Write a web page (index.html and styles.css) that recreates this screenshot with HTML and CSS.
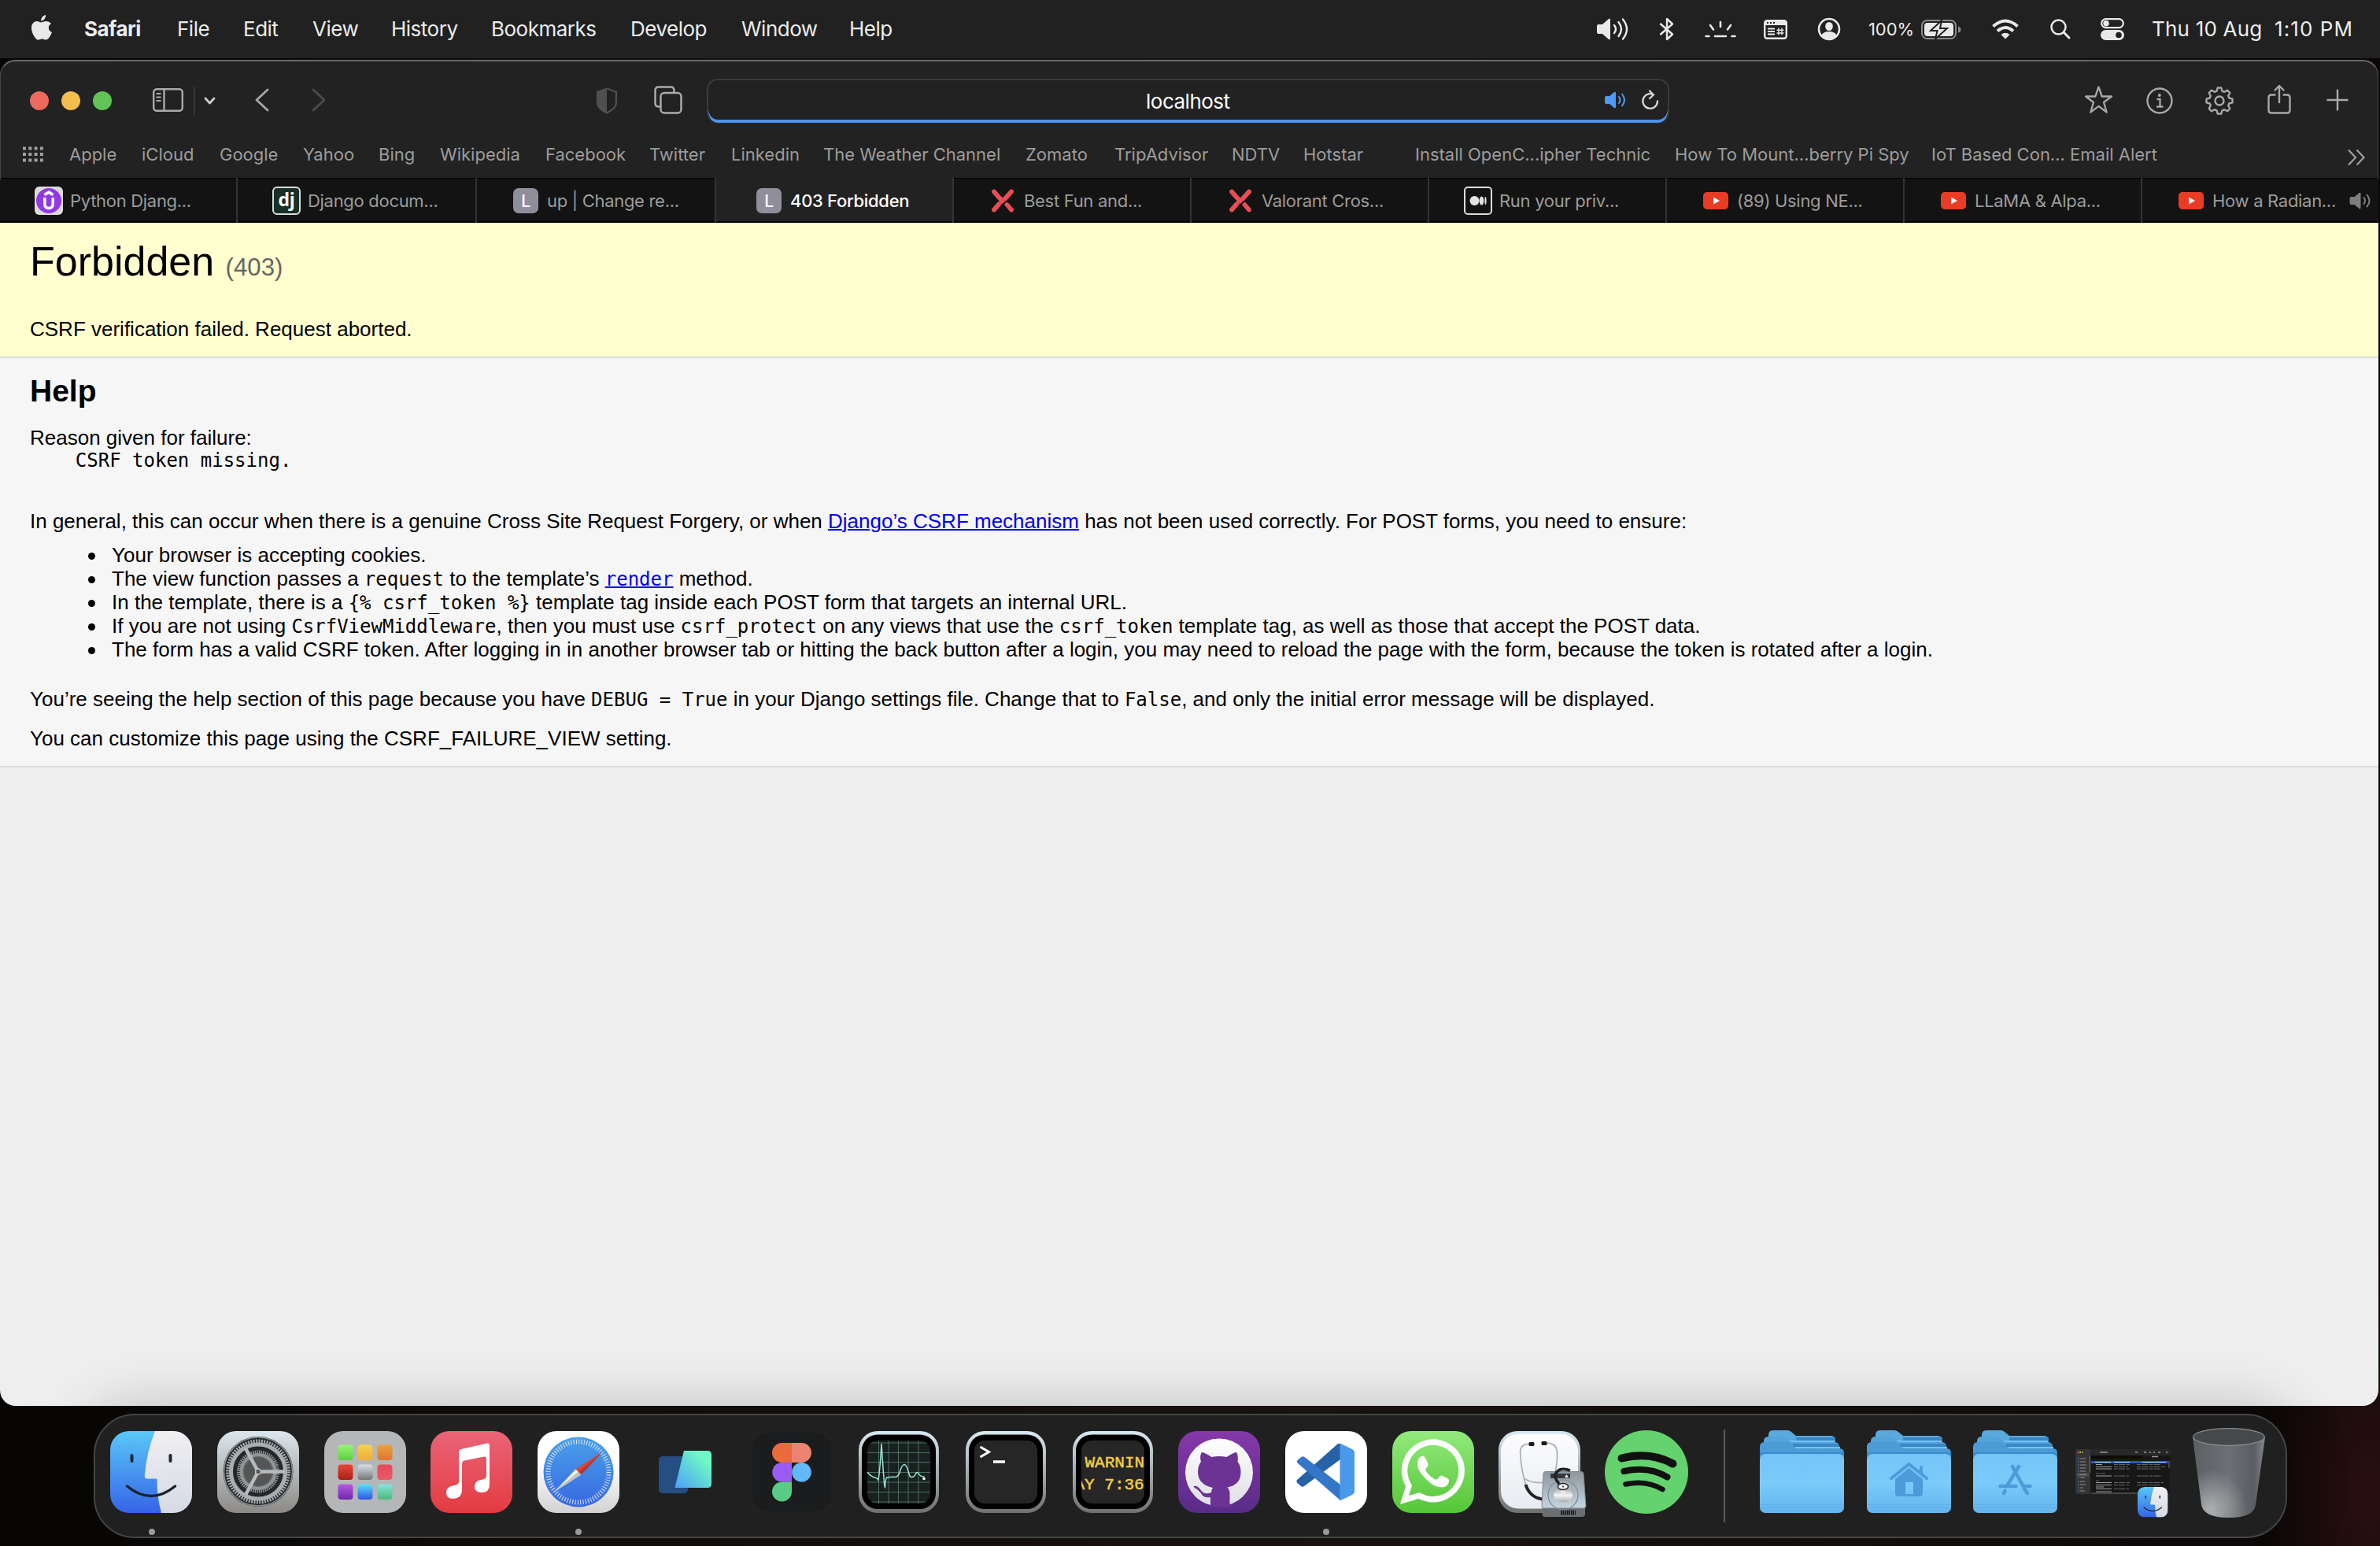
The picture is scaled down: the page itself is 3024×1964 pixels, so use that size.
FILE: index.html
```html
<!DOCTYPE html>
<html lang="en">
<head>
<meta charset="utf-8">
<title>403 Forbidden</title>
<link rel="stylesheet" href="styles.css">
</head>
<body>
<header class="menubar">
  <svg width="26" height="32" viewBox="0 0 26 32"><path fill="#e9e9e9" d="M18 0c.3 2-.5 3.900-1.600 5.200C15.200 6.600 13.700 7.500 12.200 7.400c-.2-1.900.6-3.800 1.700-5C15.100 1.100 16.800.1 18 0zM25 10.900c-2 1.200-3.200 3-3.200 5.300 0 2.700 1.600 4.800 4.100 5.800-.7 2.200-1.700 4.300-3.100 6.200-1.200 1.700-2.500 3.400-4.500 3.400s-2.500-1.200-4.800-1.200-3 1.200-4.800 1.200c-2 0-3.400-1.800-4.700-3.700C1.200 24.100 0 20 0 16.500 0 11 3.400 8 6.900 8c2.100 0 3.800 1.400 5.200 1.400S15.800 7.900 18.400 7.900c2.600 0 5 1.100 6.600 3z"/></svg>
  <b>Safari</b><span>File</span><span>Edit</span><span>View</span><span>History</span><span>Bookmarks</span><span>Develop</span><span>Window</span><span>Help</span>
  <svg width="40" height="28" viewBox="0 0 40 28"><path fill="#e9e9e9" d="M0 10q0-2 2-2h5L15 1q2-1 2 1v24q0 2-2 1L7 20H2q-2 0-2-2z"/><g fill="none" stroke="#e9e9e9" stroke-width="2.400" stroke-linecap="round"><path d="M22 9q4 5 0 10M27.500 5q7 9 0 18M33 1.500q10 12.500 0 25"/></g></svg>
  <svg width="20" height="30" viewBox="0 0 20 30"><path fill="none" stroke="#e9e9e9" stroke-width="2.400" stroke-linejoin="round" stroke-linecap="round" d="M2 8.500 17 21.500 10 28V2l7 6.500L2 21.500"/></svg>
  <svg width="40" height="24" viewBox="0 0 40 24"><path stroke="#e9e9e9" stroke-width="2.600" stroke-linecap="round" fill="none" d="M20 3v6M7 7l4 5.500M33 7l-4 5.500M1.500 21h4M13 21h14M34.500 21h4"/></svg>
  <svg width="30" height="25" viewBox="0 0 30 25"><rect x="1.200" y="1.200" width="27.600" height="22.600" rx="3" fill="none" stroke="#e9e9e9" stroke-width="2.400"/><path fill="#e9e9e9" d="M1 2h28v5H1z"/><path stroke="#212121" stroke-width="1.800" d="M4 4h2M8 4h2M12 4h2"/><path stroke="#e9e9e9" stroke-width="2" d="M5 11.500h9M5 15h9M5 18.500h9"/><path stroke="#e9e9e9" stroke-width="1.400" fill="none" d="M19 10.500v9M23 10.500v9M16.500 13.200h9M16.500 17h9"/></svg>
  <svg width="30" height="30" viewBox="0 0 30 30"><circle cx="15" cy="15" r="13" fill="none" stroke="#e9e9e9" stroke-width="2.600"/><ellipse cx="15" cy="11.500" rx="4.800" ry="5.500" fill="#e9e9e9"/><path fill="#e9e9e9" d="M5 23q3-5 10-5t10 5q-4 5-10 5T5 23z"/></svg>
  <span class="percent">100%</span>
  <svg width="52" height="25" viewBox="0 0 52 25"><rect x="1" y="1" width="43" height="23" rx="6.500" fill="none" stroke="#8a8a8a" stroke-width="2"/><rect x="4" y="4" width="37" height="17" rx="4" fill="#e9e9e9"/><path fill="#8a8a8a" d="M47 8.500q3.500 1 3.500 4t-3.500 4z"/><path fill="#e9e9e9" stroke="#212121" stroke-width="2" d="M26 1 12 14h8.500L18 24.500 33 11h-9z"/></svg>
  <svg width="34" height="26" viewBox="0 0 34 26"><g fill="none" stroke="#e9e9e9" stroke-width="4"><path d="M1.500 9.500q15.500-14 31 0"/><path d="M7 15.500q10-9 20 0"/></g><path fill="#e9e9e9" d="M11.500 20q5.500-4.500 11 0L17 25.500z"/></svg>
  <svg width="26" height="26" viewBox="0 0 26 26"><circle cx="10.500" cy="10.500" r="9" fill="none" stroke="#e9e9e9" stroke-width="2.500"/><path stroke="#e9e9e9" stroke-width="3" stroke-linecap="round" d="m17 17 7 7"/></svg>
  <svg width="30" height="28" viewBox="0 0 30 28"><rect x="1.200" y="1.200" width="27.600" height="11" rx="5.500" fill="none" stroke="#e9e9e9" stroke-width="2.200"/><circle cx="7" cy="6.700" r="3.700" fill="#e9e9e9"/><rect y="15" width="30" height="13" rx="6.500" fill="#e9e9e9"/><circle cx="23" cy="21.500" r="3.800" fill="#212121"/></svg>
  <span class="date">Thu 10 Aug</span><span class="clock">1:10 PM</span>
</header>

<main class="window">
  <div class="toolbar">
    <div class="lights"><i class="close"></i><i class="minimise"></i><i class="zoom"></i></div>
    <svg class="sidebar" width="39" height="30" viewBox="0 0 39 30"><g fill="none" stroke="#aaa" stroke-width="2.400"><rect x="1.200" y="1.200" width="36.600" height="27.600" rx="4"/><path d="M14.500 1v28"/><path d="M4.500 7h6M4.500 11.500h6M4.500 16h6" stroke-width="2"/></g></svg>
    <i class="rule"></i>
    <svg class="chevron" width="15" height="10" viewBox="0 0 15 10"><path d="m2 2 5.500 6L13 2" fill="none" stroke="#ccc" stroke-width="2.800" stroke-linecap="round" stroke-linejoin="round"/></svg>
    <svg class="back" width="18" height="30" viewBox="0 0 18 30"><path d="M16 2 2 15l14 13" fill="none" stroke="#a8a8a8" stroke-width="2.800" stroke-linecap="round" stroke-linejoin="round"/></svg>
    <svg class="forward" width="18" height="30" viewBox="0 0 18 30"><path d="m2 2 14 13L2 28" fill="none" stroke="#4d4d4d" stroke-width="2.800" stroke-linecap="round" stroke-linejoin="round"/></svg>
    <svg class="shield" width="28" height="34" viewBox="0 0 28 34"><path d="m14 1.500 12 4.500v13q0 8-12 13.500Q2 27 2 19V6z" fill="none" stroke="#505050" stroke-width="2.200"/><path fill="#505050" d="M14 1v32Q1 27 1 19V6z"/></svg>
    <svg class="copies" width="36" height="36" viewBox="0 0 36 36"><g fill="none" stroke="#aaa" stroke-width="2.500"><path d="M8 26.500H6q-4.500 0-4.500-4.500V6q0-4.500 4.500-4.500h15q4.500 0 4.500 4.500v2"/><rect x="8.500" y="9" width="26" height="25.500" rx="4.500"/></g></svg>
    <div class="address">
      <span>localhost</span>
      <svg class="sound" width="27" height="22" viewBox="0 0 27 22"><path fill="#4c9bf5" d="M0 8q0-2 2-2h4l6-5q2-1 2 1v18q0 2-2 1l-6-5H2q-2 0-2-2z"/><path d="M18 7q3 4 0 8M22 3.500q6 7.500 0 15" stroke="#4c9bf5" stroke-width="2" fill="none" stroke-linecap="round"/></svg>
      <svg class="reload" width="22" height="26" viewBox="0 0 22 26"><path d="M14.500 6A9.300 9.300 0 1 0 20 14.500M10 1.500l5 5-5 4.500" fill="none" stroke="#d8d8d8" stroke-width="2.300" stroke-linecap="round" stroke-linejoin="round"/></svg>
    </div>
    <svg class="star" width="37" height="37" viewBox="0 0 37 37"><path d="m18.500 2.500 4.200 12H35L25 22l3.700 12.500-10.200-7.600-10.200 7.600L12 22 2 14.500h12.300z" fill="none" stroke="#a8a8a8" stroke-width="2.300" stroke-linejoin="round"/></svg>
    <svg class="info" width="34" height="34" viewBox="0 0 34 34"><circle cx="17" cy="17" r="15.500" fill="none" stroke="#a8a8a8" stroke-width="2.400"/><circle cx="16.800" cy="10" r="2" fill="#a8a8a8"/><path d="M13.500 15h4v9.500M13 24.500h8.500" fill="none" stroke="#a8a8a8" stroke-width="2.300"/></svg>
    <svg class="gear" width="36" height="36" viewBox="0 0 36 36"><path fill="none" stroke="#a8a8a8" stroke-width="2.400" stroke-linejoin="round" d="M14.500 5.700 15.700 1.500h4.600l1.200 4.200 2.700 1.100 3.800-2.100 3.300 3.300-2.100 3.800 1.100 2.700 4.200 1.200v4.600l-4.200 1.200-1.100 2.700 2.100 3.800-3.300 3.300-3.800-2.100-2.700 1.100-1.200 4.200h-4.600l-1.200-4.200-2.700-1.100L8 31.300 4.700 28l2.100-3.800-1.100-2.700-4.200-1.200v-4.600l4.200-1.200 1.100-2.700L4.700 8 8 4.700l3.800 2.100z"/><circle cx="18" cy="18" r="5.500" fill="none" stroke="#a8a8a8" stroke-width="2.400"/></svg>
    <svg class="share" width="30" height="38" viewBox="0 0 30 38"><g fill="none" stroke="#a8a8a8" stroke-width="2.400" stroke-linecap="round" stroke-linejoin="round"><path d="M9.500 13.500H5q-3.500 0-3.500 3.500v16q0 3.500 3.500 3.500h20q3.500 0 3.500-3.500V17q0-3.500-3.500-3.500h-4.500M15 23V2M9.500 7.500 15 2l5.500 5.500"/></g></svg>
    <svg class="plus" width="28" height="28" viewBox="0 0 28 28"><path d="M14 1.500v25M1.500 14h25" stroke="#a8a8a8" stroke-width="2.500" stroke-linecap="round"/></svg>
  </div>

  <nav class="favourites">
    <svg width="26" height="20" viewBox="0 0 26 20"><path d="M0 2.500h26M0 10h26M0 17.500h26" stroke="#a0a0a0" stroke-width="4" stroke-dasharray="4 3.300"/></svg>
    <span>Apple</span><span>iCloud</span><span>Google</span><span>Yahoo</span><span>Bing</span><span>Wikipedia</span><span>Facebook</span><span>Twitter</span><span>Linkedin</span><span>The Weather Channel</span><span>Zomato</span><span>TripAdvisor</span><span>NDTV</span><span>Hotstar</span><span>Install OpenC...ipher Technic</span><span>How To Mount...berry Pi Spy</span><span>IoT Based Con... Email Alert</span>
    <svg class="more" width="24" height="22" viewBox="0 0 24 22"><path d="m2 1.500 9 9.500-9 9.500M12.500 1.500l9 9.500-9 9.500" fill="none" stroke="#a0a0a0" stroke-width="2.200"/></svg>
  </nav>

  <div class="tabs">
    <div class="tab"><svg width="36" height="36" viewBox="0 0 36 36"><rect width="36" height="36" rx="6" fill="#dcdcdc"/><circle cx="18" cy="18" r="16" fill="#9238e8"/><path d="M12.500 10.500 18 7.200l5.500 3.300M12.800 14v8q0 5.500 5.200 5.500t5.200-5.500v-8" fill="none" stroke="#fff" stroke-width="3.600"/></svg><span>Python Djang...</span></div>
    <div class="tab"><svg width="36" height="36" viewBox="0 0 36 36"><rect x="1" y="1" width="34" height="34" rx="5" fill="#173028" stroke="#dcdcdc" stroke-width="2"/><text x="18" y="25" text-anchor="middle" font-family="Open Sans, sans-serif" font-weight="700" font-size="23" fill="#fff">dj</text></svg><span>Django docum...</span></div>
    <div class="tab"><svg width="36" height="36" viewBox="0 0 36 36"><rect x="2" y="2" width="32" height="32" rx="7" fill="#8f8f9c"/><text x="18" y="26" text-anchor="middle" font-family="Inter, sans-serif" font-weight="500" font-size="21" fill="#fff">L</text></svg><span>up | Change re...</span></div>
    <div class="tab active"><svg width="36" height="36" viewBox="0 0 36 36"><rect x="2" y="2" width="32" height="32" rx="7" fill="#8f8f9c"/><text x="18" y="26" text-anchor="middle" font-family="Inter, sans-serif" font-weight="500" font-size="21" fill="#fff">L</text></svg><span>403 Forbidden</span></div>
    <div class="tab"><svg width="36" height="36" viewBox="0 0 36 36"><path d="M7 6.500 17.500 18.500M29 6.500 20.500 16M7 29.500l6.500-7.500M23.500 23l5.500 6.500" stroke="#ea4e55" stroke-width="5.800" stroke-linecap="round"/></svg><span>Best Fun and...</span></div>
    <div class="tab"><svg width="36" height="36" viewBox="0 0 36 36"><path d="M7 6.500 17.500 18.500M29 6.500 20.500 16M7 29.500l6.500-7.500M23.500 23l5.500 6.500" stroke="#ea4e55" stroke-width="5.800" stroke-linecap="round"/></svg><span>Valorant Cros...</span></div>
    <div class="tab"><svg width="36" height="36" viewBox="0 0 36 36"><rect x="1" y="1" width="34" height="34" rx="4" fill="#131313" stroke="#dcdcdc" stroke-width="2"/><circle cx="13.500" cy="18" r="6" fill="#e4e4e4"/><ellipse cx="22.500" cy="18" rx="2.800" ry="5.600" fill="#e4e4e4"/><ellipse cx="27.500" cy="18" rx="1.100" ry="5" fill="#e4e4e4"/></svg><span>Run your priv...</span></div>
    <div class="tab"><svg width="36" height="36" viewBox="0 0 36 36"><rect x="2" y="7" width="32" height="22" rx="5" fill="#ea3c25"/><path d="m15 13.500 8 4.500-8 4.500z" fill="#fff"/></svg><span>(89) Using NE...</span></div>
    <div class="tab"><svg width="36" height="36" viewBox="0 0 36 36"><rect x="2" y="7" width="32" height="22" rx="5" fill="#ea3c25"/><path d="m15 13.500 8 4.500-8 4.500z" fill="#fff"/></svg><span>LLaMA &amp; Alpa...</span></div>
    <div class="tab"><svg width="36" height="36" viewBox="0 0 36 36"><rect x="2" y="7" width="32" height="22" rx="5" fill="#ea3c25"/><path d="m15 13.500 8 4.500-8 4.500z" fill="#fff"/></svg><span>How a Radian...</span><svg class="playing" width="28" height="22" viewBox="0 0 27 22"><path fill="#7d7d7d" d="M0 8q0-2 2-2h4l6-5q2-1 2 1v18q0 2-2 1l-6-5H2q-2 0-2-2z"/><path d="M18 7q3 4 0 8M22 3.500q6 7.500 0 15" stroke="#7d7d7d" stroke-width="2" fill="none" stroke-linecap="round"/></svg></div>
  </div>

  <section class="summary">
    <h1>Forbidden <span>(403)</span></h1>
    <p>CSRF verification failed. Request aborted.</p>
  </section>
  <section class="help">
    <h2>Help</h2>
    <p>Reason given for failure:</p>
    <pre>    CSRF token missing.</pre>
    <p class="general">In general, this can occur when there is a genuine Cross Site Request Forgery, or when <a>Django’s CSRF mechanism</a> has not been used correctly. For POST forms, you need to ensure:</p>
    <ul>
      <li>Your browser is accepting cookies.</li>
      <li>The view function passes a <code>request</code> to the template’s <a><code>render</code></a> method.</li>
      <li>In the template, there is a <code>{% csrf_token %}</code> template tag inside each POST form that targets an internal URL.</li>
      <li>If you are not using <code>CsrfViewMiddleware</code>, then you must use <code>csrf_protect</code> on any views that use the <code>csrf_token</code> template tag, as well as those that accept the POST data.</li>
      <li>The form has a valid CSRF token. After logging in in another browser tab or hitting the back button after a login, you may need to reload the page with the form, because the token is rotated after a login.</li>
    </ul>
    <p class="debug">You’re seeing the help section of this page because you have <code>DEBUG = True</code> in your Django settings file. Change that to <code>False</code>, and only the initial error message will be displayed.</p>
    <p class="custom">You can customize this page using the CSRF_FAILURE_VIEW setting.</p>
  </section>
</main>

<svg class="defs" width="0" height="0">
  <defs>
    <linearGradient id="finderL" x2="0" y2="1"><stop stop-color="#5ac8f8"/><stop offset="1" stop-color="#3564e8"/></linearGradient>
    <linearGradient id="finderR" x2="0" y2="1"><stop stop-color="#f1f0f1"/><stop offset="1" stop-color="#d5dae6"/></linearGradient>
    <linearGradient id="sysBg" x2="0" y2="1"><stop stop-color="#dbe6ec"/><stop offset="1" stop-color="#8c8a86"/></linearGradient>
    <linearGradient id="metal" x2="0" y2="1"><stop stop-color="#d6e8f0"/><stop offset="1" stop-color="#707070"/></linearGradient>
    <linearGradient id="music" x2="0" y2="1"><stop stop-color="#e96578"/><stop offset="1" stop-color="#e33b40"/></linearGradient>
    <linearGradient id="safariBg" x2="0" y2="1"><stop offset=".4" stop-color="#fff"/><stop offset="1" stop-color="#d2d2d2"/></linearGradient>
    <linearGradient id="safariDial" x2="0" y2="1"><stop stop-color="#4aa0ea"/><stop offset="1" stop-color="#3868e0"/></linearGradient>
    <linearGradient id="cards" x1="0" y1="1" x2="1" y2="0"><stop stop-color="#4aa0f8"/><stop offset=".8" stop-color="#72f8c4"/></linearGradient>
    <linearGradient id="hub" x2="0" y2="1"><stop stop-color="#8638aa"/><stop offset="1" stop-color="#582c86"/></linearGradient>
    <linearGradient id="hubRing" x2="0" y2="1"><stop stop-color="#fff"/><stop offset="1" stop-color="#dedee6"/></linearGradient>
    <linearGradient id="wa" x2="0" y2="1"><stop stop-color="#92ea7c"/><stop offset="1" stop-color="#56c638"/></linearGradient>
    <linearGradient id="paper" x2="0" y2="1"><stop stop-color="#fdfdfe"/><stop offset="1" stop-color="#e8ebf1"/></linearGradient>
    <linearGradient id="disk" x2="0" y2="1"><stop stop-color="#8d979e"/><stop offset="1" stop-color="#c5d5df"/></linearGradient>
    <linearGradient id="chrome" x2="0" y2="1"><stop stop-color="#a4a7a9"/><stop offset=".5" stop-color="#f4f5f5"/><stop offset="1" stop-color="#a8abad"/></linearGradient>
    <linearGradient id="folderFront" x2="0" y2="1"><stop stop-color="#74c4f6"/><stop offset=".5" stop-color="#7acbfa"/><stop offset="1" stop-color="#63b4ec"/></linearGradient>
    <linearGradient id="trash" x2="1" y2="0"><stop stop-color="#5c6064"/><stop offset=".5" stop-color="#6c7074"/><stop offset=".85" stop-color="#5a5e62"/><stop offset="1" stop-color="#85898c"/></linearGradient>
    <radialGradient id="trashGlow" cx=".25" cy=".9" r=".5"><stop stop-color="#c4c8ca" stop-opacity=".75"/><stop offset="1" stop-color="#c4c8ca" stop-opacity="0"/></radialGradient>
    <linearGradient id="tGreen" x2="0" y2="1"><stop stop-color="#9bf578"/><stop offset="1" stop-color="#5bd03e"/></linearGradient>
    <linearGradient id="tYellow" x2="0" y2="1"><stop stop-color="#f6d04c"/><stop offset="1" stop-color="#f0ae36"/></linearGradient>
    <linearGradient id="tOrange" x2="0" y2="1"><stop stop-color="#eca038"/><stop offset="1" stop-color="#e07632"/></linearGradient>
    <linearGradient id="tRed" x2="0" y2="1"><stop stop-color="#ea4838"/><stop offset="1" stop-color="#a82018"/></linearGradient>
    <linearGradient id="tGrey" x2="0" y2="1"><stop stop-color="#d8e0e4"/><stop offset="1" stop-color="#747678"/></linearGradient>
    <linearGradient id="tPink" x2="0" y2="1"><stop stop-color="#e84858"/><stop offset="1" stop-color="#e85a6c"/></linearGradient>
    <linearGradient id="tPurple" x2="0" y2="1"><stop stop-color="#b45ae4"/><stop offset="1" stop-color="#6c2aa8"/></linearGradient>
    <linearGradient id="tBlue" x2="0" y2="1"><stop stop-color="#5ce0fa"/><stop offset="1" stop-color="#2e52e6"/></linearGradient>
    <linearGradient id="tTeal" x2="0" y2="1"><stop stop-color="#84e6de"/><stop offset="1" stop-color="#50b878"/></linearGradient>
    <clipPath id="tile"><rect width="104" height="104" rx="24"/></clipPath>
    <clipPath id="screen"><rect x="12" y="12" width="80" height="80" rx="13"/></clipPath>
    <g id="finder" clip-path="url(#tile)"><path fill="url(#finderL)" d="M0 0h104v104H0z"/><path fill="url(#finderR)" d="M57 0Q46 28 43.800 56q-.3 4.500 3 4.500H59.500Q59 82 65 104h39V0z"/><path d="M27.500 31v7M76.500 31v7" stroke="#1d2733" stroke-width="4" stroke-linecap="round"/><path d="M21.500 70q30.500 25 61 0" fill="none" stroke="#1b2330" stroke-width="3.400" stroke-linecap="round"/></g>
    <g id="folder"><path fill="#5aa9de" d="M11 12V6q0-6 6-6h18q3 0 5 2l6 5h44q6 0 6 6v12H11z"/><path fill="#3a86c4" d="M46 9h50v6H46z"/><path fill="#74c2f4" d="M11 13h84v8H11z"/><path fill="#54a3da" d="M5 20v-6q0-6 6-6h18q3 0 5 2l6 5h55q6 0 6 6v8H5z"/><path fill="#3a86c4" d="M42 17h58v5H42z"/><path fill="#74c2f4" d="M42 21h60v6H42z"/><path fill="#4a9bd6" d="M0 36V21q0-6 6-6h28q3 0 5 2l7 6h55q6 0 6 6v9H0z"/><path fill="#3a8bcb" d="M0 28h107v10H0z"/><rect y="30" width="107" height="75" rx="7" fill="url(#folderFront)"/><path d="M0 94.500h107M0 98.500h107" stroke="#58a8e0" stroke-opacity=".5"/></g>
    <g id="watch"><rect x="1" width="102" height="104" rx="24" fill="url(#metal)"/><rect x="5" y="4.500" width="94" height="94.500" rx="20" fill="#000"/></g>
  </defs>
</svg>

<footer class="dock">
  <div class="app running"><svg viewBox="0 0 104 104"><use href="#finder"/></svg></div>
  <div class="app"><svg viewBox="0 0 104 104"><rect width="104" height="104" rx="24" fill="url(#sysBg)"/><circle cx="52" cy="51.500" r="44.500" fill="#24282b"/><circle cx="52" cy="51.500" r="43.500" fill="none" stroke="#8c9296" stroke-width="1.500"/><circle cx="52" cy="51.500" r="38" fill="none" stroke="#a8adb0" stroke-width="6" stroke-dasharray="1.900 1.420"/><circle cx="52" cy="51.500" r="34.500" fill="none" stroke="#a8adb0" stroke-width="5"/><circle cx="52" cy="51.500" r="23" fill="#686a6b"/><circle cx="52" cy="51.500" r="25" fill="none" stroke="#8f9497" stroke-width="4" stroke-dasharray="1.500 1.120"/><circle cx="52" cy="51.500" r="21.500" fill="none" stroke="#8f9497" stroke-width="4"/><circle cx="52" cy="51.500" r="18" fill="#555"/><path d="M52 51.500h34M52 51.500 36 22M52 51.500 36 81" stroke="#b6bbbe" stroke-width="4.500"/><circle cx="52" cy="51.500" r="3.500" fill="#555b5e" stroke="#c0c5c8" stroke-width="1.500"/></svg></div>
  <div class="app"><svg viewBox="0 0 104 104"><rect width="104" height="104" rx="24" fill="#b5b6b7"/><rect x="17.500" y="17.500" width="19" height="19.500" rx="4" fill="url(#tGreen)"/><rect x="42.500" y="17.500" width="19" height="19.500" rx="4" fill="url(#tYellow)"/><rect x="67.500" y="17.500" width="19" height="19.500" rx="4" fill="url(#tOrange)"/><rect x="17.500" y="42.500" width="19" height="19.500" rx="4" fill="url(#tRed)"/><rect x="42.500" y="42.500" width="19" height="19.500" rx="4" fill="url(#tGrey)"/><rect x="67.500" y="42.500" width="19" height="19.500" rx="4" fill="url(#tPink)"/><rect x="17.500" y="67.500" width="19" height="19.500" rx="4" fill="url(#tPurple)"/><rect x="42.500" y="67.500" width="19" height="19.500" rx="4" fill="url(#tBlue)"/><rect x="67.500" y="67.500" width="19" height="19.500" rx="4" fill="url(#tTeal)"/></svg></div>
  <div class="app"><svg viewBox="0 0 104 104"><rect width="104" height="104" rx="24" fill="url(#music)"/><path fill="#fff" d="M36 27q0-3 3-4l33-7.500q3-.5 3 2.500v50q0 10-10 10-9 0-9-7.500 0-7 8-8.500 7-1 7-5V35q0-3-3-2.500L43 37.500q-3 .8-3 4V75q0 10-11 11-9 0-9-8 0-7 8-8.500 8-1 8-5z"/></svg></div>
  <div class="app running"><svg viewBox="0 0 104 104"><rect width="104" height="104" rx="24" fill="url(#safariBg)"/><circle cx="52" cy="52" r="44.500" fill="url(#safariDial)"/><circle cx="52" cy="52" r="38.500" fill="none" stroke="#fff" stroke-opacity=".85" stroke-width="6" stroke-dasharray="1 2.360"/><path fill="#e0452e" d="M83 26 48.500 48.500 52 52z"/><path fill="#b8362a" d="M83 26 55.500 55.500 52 52z"/><path fill="#f2f2f2" d="M20.500 78 48.500 48.500 52 52z"/><path fill="#c2c4c8" d="M20.500 78 55.500 55.500 52 52z"/></svg></div>
  <div class="app"><svg viewBox="0 0 104 104"><rect x="1" y="1" width="102" height="102" rx="24" fill="#202020" stroke="#1d1d1d"/><rect x="18" y="32" width="37" height="47" rx="5" fill="#264e82"/><path fill="url(#cards)" d="M50 25h30q5 0 5 5v37q0 5-5 5H38.500z"/></svg></div>
  <div class="app"><svg viewBox="0 0 104 104"><rect x="1" y="1" width="102" height="102" rx="24" fill="#1b1c1d" stroke="#262423"/><path fill="#ea6a3c" d="M52 15v25H39.500a12.500 12.500 0 0 1 0-25z"/><path fill="#ec8472" d="M52 15h12.500a12.500 12.500 0 0 1 0 25H52z"/><path fill="#9a5cf2" d="M52 40v24.500H39.500a12.250 12.250 0 0 1 0-24.500z"/><circle cx="64.500" cy="52.200" r="12.300" fill="#62b8f8"/><path fill="#5acb84" d="M52 64.500V77a12.500 12.500 0 1 1-12.500-12.500z"/></svg></div>
  <div class="app"><svg viewBox="0 0 104 104"><use href="#watch"/><rect x="12" y="12" width="80" height="80" rx="13" fill="#18211f"/><g clip-path="url(#screen)"><path d="M26.500 12v80M39 12v80M51.500 12v80M64 12v80M77 12v80M12 15h80M12 27.500h80M12 39.500h80M12 52.500h80M12 65h80M12 77.500h80M12 90h80" stroke="#54746a" stroke-width=".9" fill="none"/><path d="M12 52q4 6 10 7 3 1 4 3 2-12 4-46 2.500 40 3 43 .5 13 1.500 13 .5-12 2.500-13 6-1 10-.5 4 0 6-6 3-10 6-10t6 12q1 4.500 4 4 3-.5 5-5 1.500-2.500 3.500 1 2 3.500 7 3.500" fill="none" stroke="#9be4d0" stroke-width="1.500"/></g><circle cx="84" cy="60.500" r="1.800" fill="#fff"/></svg></div>
  <div class="app"><svg viewBox="0 0 104 104"><use href="#watch"/><rect x="12" y="12" width="80" height="80" rx="13" fill="#262626"/><path d="m19.500 20 11 6.500-11 6.500" fill="none" stroke="#fff" stroke-width="3"/><path d="M36 39h15" stroke="#fff" stroke-width="3.500"/></svg></div>
  <div class="app"><svg viewBox="0 0 104 104"><use href="#watch"/><rect x="12" y="12" width="80" height="80" rx="13" fill="#262626"/><g clip-path="url(#screen)" font-family="Liberation Mono, monospace" font-size="21" fill="#f2cc48" stroke="#f2cc48" stroke-width=".5"><text x="16.500" y="46">WARNING</text><text x="3.500" y="74">AY 7:36</text></g></svg></div>
  <div class="app"><svg viewBox="0 0 104 104"><rect width="104" height="104" rx="24" fill="url(#hub)"/><circle cx="52" cy="52.500" r="43" fill="url(#hubRing)"/><path fill="#6c3294" d="M29.500 27.500q1-1 4 .5 5 2 9 5 9-2 19 0 4-3 9-5 3-1.500 4-.5 2 5 1 11 4 6 4 13 0 8-3 12-4 6-14 8 3 3 3 8v17H41V84q-7 1-10-2-3-5-7-8-5-3-4-4 4-1 8 4 5 8 14 4 .5-4 2-6-10-2-15-8-4-5-4-12 0-8 4-13-2-6 .5-11.500z"/></svg></div>
  <div class="app running"><svg viewBox="0 0 104 104"><rect width="104" height="104" rx="24" fill="#fff"/><path fill="#2862a6" d="M67 16h3v20L24 70q-2 1.500-4 0l-5-4.500q-1.500-2 0-3.500z"/><path fill="#3477c8" d="M70 88 15.500 40.500q-1.500-1.500 0-3.500l5-4q2-1.500 4 0L70 68z"/><path fill="#4a98ea" d="M69.500 15.500 85 23q3 1.500 3 4v50q0 2.500-3 4l-15.500 7.500z"/></svg></div>
  <div class="app"><svg viewBox="0 0 104 104"><rect width="104" height="104" rx="24" fill="url(#wa)"/><path d="m15.500 87.500 5.500-18a36.300 36.300 0 1 1 13 12.500z" fill="none" stroke="#fbfdfb" stroke-width="7.500"/><path fill="#fbfdfb" d="M33.500 35q3-4 6.500-3 2 .6 5.500 10 .5 2-3 6-1 1.500 1 4 5 7 12 9.500 1.500.3 2.500-1 2-3.500 4-4 2-.3 9.500 4.500 1 1 0 5-2 5-8 5.500-8 .3-17-7-13-12-14.500-20-.5-5.500 1.500-9.500z"/></svg></div>
  <div class="app"><svg viewBox="0 0 104 104"><rect width="104" height="104" rx="24" fill="url(#metal)"/><rect x="3" y="3.500" width="98" height="95" rx="22" fill="url(#paper)"/><path d="M40 16.500q-13-1-12.300 12Q29 50 34.500 68M60 15.500q14-1 14.500 12Q75 50 68 60q-7 6-17 5.500-10 0-18-5" fill="none" stroke="#aeb2b6" stroke-width="1.800"/><path d="M34.500 68q5 16 21 18.500" fill="none" stroke="#222" stroke-width="4"/><rect x="38.500" y="14" width="7" height="5" rx="1.500" fill="#1c1c1c"/><rect x="54.500" y="13" width="7" height="5" rx="1.500" fill="#1c1c1c"/><path fill="#6b6f72" d="M55.500 98h54.500v7q0 4-4 4H59.500q-4 0-4-4z"/><path d="M79 103.500h19" stroke="#161616" stroke-width="6" stroke-dasharray="1.600 1"/><path fill="url(#disk)" stroke="#7d868c" d="M60 51.500h45q3 0 3 3L111 95q0 3-3 3H58q-3 0-3-3l2-40.500q0-3 3-3z"/><rect x="66" y="54" width="25" height="6" fill="#33383b"/><path d="m86.500 55 2.500 4h-5z" fill="#eee"/><circle cx="82" cy="81" r="19" fill="none" stroke="#7e8a92" stroke-width="1.200"/><ellipse cx="82" cy="81.500" rx="12" ry="9" fill="url(#chrome)"/><path d="M79 72h6v8h-6z" fill="#e4e6e7"/><path d="M77 67Q69 58 74 52t17-2" fill="none" stroke="#222" stroke-width="3.600"/><ellipse cx="82" cy="70.500" rx="6.500" ry="4" fill="#eceff0" stroke="#2a2a2a" stroke-width="1.500"/><circle cx="82" cy="70.500" r="1" fill="#222"/></svg></div>
  <div class="app"><svg viewBox="0 0 104 104"><circle cx="52" cy="52" r="53" fill="#64d26e"/><g fill="none" stroke="#111" stroke-linecap="round"><path d="M20.500 34.500q36-9 65 7" stroke-width="10"/><path d="M23.500 51q31-7 55 7.500" stroke-width="8"/><path d="M25.500 67.500q26-5.500 47 6.500" stroke-width="6.500"/></g></svg></div>
  <i class="divider"></i>
  <div class="app"><svg class="stack" viewBox="0 0 107 105"><use href="#folder"/></svg></div>
  <div class="app"><svg class="stack" viewBox="0 0 107 105"><use href="#folder"/><path d="m31 61 22.500-18L76 61M69 47v7" fill="none" stroke="#4f9ad9" stroke-width="4" stroke-linecap="round"/><path fill="#4f9ad9" fill-rule="evenodd" d="m53.500 48 17.500 14v18q0 4-4 4H40q-4 0-4-4V62zM49 66v15h10V66z"/></svg></div>
  <div class="app"><svg class="stack" viewBox="0 0 107 105"><use href="#folder"/><path d="M50 46 63 70M58 46 44 69M65 74l4 6M40.500 77l-1.500 3M34.500 71h20M64 71h8.500" fill="none" stroke="#4f9ad9" stroke-width="4.600" stroke-linecap="round"/></svg></div>
  <div class="app"><svg class="mini" viewBox="0 0 120 88"><rect width="120" height="57" rx="2" fill="#171717"/><path fill="#353535" d="M0 2q0-2 2-2h17v57H2q-2 0-2-2z"/><path fill="#292929" d="M19 0h99q2 0 2 2v6H19z"/><path fill="#0c0c0c" d="M19 8h67v4H19z"/><path d="M2 32.500h15" stroke="#505050" stroke-width="4"/><circle cx="3.500" cy="4" r="1" fill="#ed6a5e"/><circle cx="6.200" cy="4" r="1" fill="#f4bd4f"/><circle cx="9" cy="4" r="1" fill="#61c454"/><path d="M20 16.500h98" stroke="#2656c8" stroke-width="3"/><path d="M3.500 12h1M3.500 16h1M3.500 20h1M3.500 24h1M3.500 28h1M3.500 32h1M3.500 36h1M3.500 41h1M3.500 45h1M3.500 49h1M3.500 53h1" stroke="#3f8ad8" stroke-width="1.800"/><path d="M6 12h7M6 16h7M6 20h8M6 24h7M6 28h7M6 32h8M6 36h6M6 41h6M6 45h7M6 49h4M6 53h6" stroke="#909090" stroke-width="1"/><path d="M25 16.500h20M49 16.500h20M85 16.500h30" stroke="#b9c8ee" stroke-width="1"/><path d="M26 19.500h8M26 22.500h20M26 25h20M26 34h20M26 42.500h20M26 45.500h20M26 48h10M26 50.500h20M26 54h20" stroke="#a0a0a0" stroke-width="1"/><path d="M26 31h12M26 40h4M49 19.500h20M49 22.500h18M49 25h20M49 34h19M49 42.500h20M49 45.500h19M49 50.500h19M78 19.500h30M78 22.500h36M78 25h30M78 34h32M78 42.500h34M78 45.500h30" stroke="#666" stroke-width="1" stroke-dasharray="5 1 8 1.500"/><path d="M31 4h10M76 4h3M87 4h3M94 4h2M99 4h2M105 4h3M115 4h2M97 9.500h8" stroke="#999" stroke-width="1.500"/><path d="M20 56h60M119 15v9M18.500 8v22" stroke="#777"/><use href="#finder" transform="translate(79 48) scale(.37)"/></svg></div>
  <div class="app"><svg class="bin" viewBox="0 0 92 114"><path fill="url(#trash)" d="M0 12 11 97q2 17 35 17t34-17L92 12z"/><path fill="url(#trashGlow)" d="M0 12 11 97q2 17 35 17t34-17L92 12z"/><ellipse cx="46" cy="11.500" rx="45.300" ry="10.800" fill="#46494c" stroke="#8a8d90" stroke-width="1.200"/></svg></div>
</footer>
</body>
</html>
```
FILE: styles.css
```css
* { box-sizing: border-box; margin: 0; padding: 0; }

body {
  width: 3024px;
  height: 1964px;
  overflow: hidden;
  display: flex;
  flex-direction: column;
  font-family: Inter, sans-serif;
  background:
    radial-gradient(ellipse 130px 330px at 3010px 1900px, #2a1010, transparent),
    linear-gradient(90deg, #070605, #14100d 30%, #1c1512 55%, #14100e 80%, #0b0606);
}

svg { display: block; flex: none; overflow: visible; }
.defs { position: absolute; }

/* System menu bar */
.menubar {
  flex: none;
  height: 74px;
  padding-left: 40px;
  display: grid;
  grid-template-columns: 67px 118px 84px 88px 100px 127px 177px 141px 137px 950px 79px 58px 75px 68px 65px 67px 90px 74px 64px 65px 156px 134px;
  align-items: center;
  background: #212121;
  color: #ececec;
  font-size: 26px;
  letter-spacing: -0.5px;
  white-space: nowrap;
}
.menubar > svg:first-child { margin-top: -4px; }
.menubar > b, .menubar > span { margin-top: -1px; }
.menubar .percent { font-size: 22px; letter-spacing: -0.1px; }
.menubar .date { letter-spacing: 0.2px; }
.menubar .clock { letter-spacing: 1.1px; }

/* Browser window */
.window {
  position: relative;
  flex: none;
  width: 3022px;
  height: 1710px;
  margin-top: 2px;
  border-radius: 20px;
  overflow: hidden;
  background: #eee;
}
.window::after {
  content: "";
  position: absolute;
  inset: 0 0 auto;
  height: 150px;
  border-radius: 20px 20px 0 0;
  border: 1px solid #444;
  border-top: 2px solid #68686b;
  border-bottom: 0;
}
.toolbar {
  height: 104px;
  padding-left: 38px;
  display: flex;
  align-items: center;
  background: #222;
}
.lights { display: flex; gap: 16px; }
.lights i { width: 24px; height: 24px; border-radius: 50%; }
.close { background: #ed6a5e; }
.minimise { background: #f4bd4f; }
.zoom { background: #61c454; }
.sidebar { margin: -2px 0 0 52px; }
.rule { width: 2px; height: 36px; margin-left: 13px; background: #363636; }
.chevron { margin-left: 11px; }
.back { margin: -2px 0 0 50px; }
.forward { margin: -2px 0 0 54px; }
.shield { margin-left: 343px; }
.copies { margin: -2px 0 0 46px; }
.address {
  width: 1223px;
  height: 56px;
  margin-left: 31px;
  padding: 0 11px 4px 556px;
  display: flex;
  align-items: center;
  border: 2px solid #3a3a3a;
  border-bottom: 0;
  border-radius: 14px;
  box-shadow: inset 0 -4px 0 #4a94ec;
  color: #fff;
  font-size: 26px;
  letter-spacing: -0.5px;
}
.address span { margin-top: 2px; }
.sound { margin-left: auto; }
.reload { margin-left: 20px; }
.star { margin: -4px 0 0 527px; }
.info { margin-left: 42px; }
.gear { margin-left: 41px; }
.share { margin: -5px 0 0 43px; }
.plus { margin: -2px 0 0 45px; }

.favourites {
  height: 46px;
  padding: 0 0 14px 29px;
  display: grid;
  grid-template-columns: 59px 92px 99px 106px 96px 78px 134px 132px 104px 117px 257px 113px 149px 91px 142px 330px 326px 528px 24px;
  align-items: center;
  background: #222;
  color: #9c9c9c;
  font-size: 22px;
  white-space: nowrap;
}
.more { margin-top: 8px; }

.tabs {
  height: 57px;
  display: grid;
  grid-template-columns: 300px 304px 304px 302px 302px 302px 302px 302px 302px 302px;
  background: #131313;
  color: #9c9c9c;
  font-size: 22px;
  letter-spacing: -0.3px;
  white-space: nowrap;
}
.tab {
  display: flex;
  align-items: center;
  gap: 9px;
  padding-left: 44px;
  border-left: 2px solid #333;
  box-shadow: inset 0 1px 0 #000, inset 0 -2px 0 #000;
}
.tab:first-child { border-left: 0; }
.tab.active {
  padding-left: 49px;
  background: #222;
  box-shadow: inset 0 -2px 0 #000;
  color: #fff;
  font-weight: 500;
}
.playing { margin-left: auto; margin-right: 9px; }

/* Error page */
.summary, .help {
  padding-left: 38px;
  border-bottom: 2px solid #ddd;
  color: #000;
  font: 26px/30px "Liberation Sans", Arial, sans-serif;
  white-space: nowrap;
}
.summary { height: 172px; padding-top: 19px; background: #ffffcf; }
.summary h1 { margin-bottom: 41px; font-size: 52px; font-weight: 400; line-height: 60px; }
.summary h1 span { color: #666; font-size: 31.2px; line-height: 0; }
.help { height: 520px; padding-top: 20px; background: #f6f6f6; }
.help h2 { margin-bottom: 22px; font-size: 39px; line-height: 44px; }
.help pre { font: 24px/28px "DejaVu Sans Mono", monospace; }
.help code { font: 24px/0 "DejaVu Sans Mono", monospace; }
.help a { color: #0000e6; text-decoration: underline; text-decoration-thickness: 2px; }
.general { margin-top: 48px; }
.help ul { margin: 13px 0 33px 72px; list-style: none; }
.help li { display: grid; grid-template-columns: 1fr; padding-left: 32px; position: relative; display: block; }
.help li::before {
  content: "";
  position: absolute;
  left: 2px;
  top: 12px;
  width: 9px;
  height: 9px;
  border-radius: 50%;
  background: #000;
}
.custom { margin-top: 20px; }

/* Dock */
.dock {
  position: relative;
  flex: none;
  align-self: center;
  width: 2787px;
  height: 158px;
  margin-top: 10px;
  padding-left: 4px;
  display: flex;
  background: #202020;
  border: 2px solid #444;
  border-radius: 52px;
  box-shadow: 0 0 70px 10px rgba(0, 0, 0, .2);
}
.app {
  position: relative;
  flex: none;
  width: 135.7px;
  padding-top: 20px;
  display: flex;
  justify-content: center;
  align-items: flex-start;
}
.app svg { width: 104px; height: 104px; }
.app .stack { width: 107px; height: 105px; margin-top: -1px; }
.app .mini { width: 120px; height: 88px; margin-top: 23px; }
.app .bin { width: 92px; height: 114px; margin-top: -4px; }
.running::after {
  content: "";
  position: absolute;
  left: 64px;
  bottom: 2px;
  width: 8px;
  height: 8px;
  border-radius: 50%;
  background: #9a9a9a;
}
.divider { flex: none; width: 2px; height: 118px; margin: 18px 29.9px 0; background: #5a5a5a; }
```
